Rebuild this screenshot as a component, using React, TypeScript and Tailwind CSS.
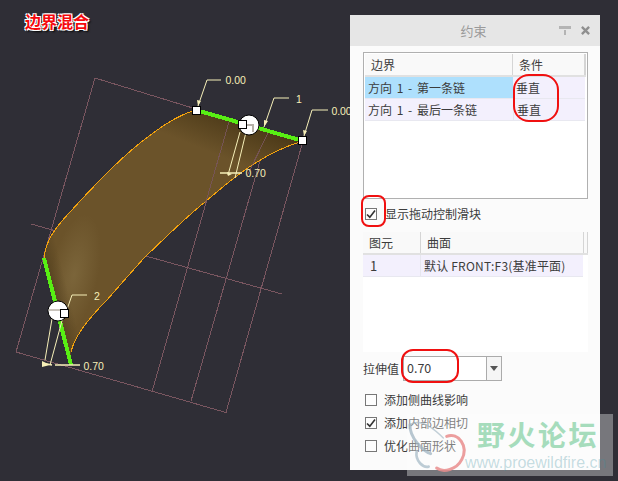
const F = '"Noto Sans CJK SC", "Liberation Sans", sans-serif';

function Canvas() {
  const pink = "#7a5660";
  const yel = "#f6efb8";
  const surface =
    "M196 110C175 116 158 129 140 143C115 163 90 190 70 212C55 228 46 240 44 258L71 365L71 352C74 338 85 322 107 300C120 285 135 268 145 257C165 238 185 218 205 202C235 176 265 152 303 141Z";
  return (
    <svg width="350" height="481" viewBox="0 0 350 481" className="shrink-0 block">
      <defs>
        <linearGradient id="sf" gradientUnits="userSpaceOnUse" x1="222" y1="108" x2="205" y2="150">
          <stop offset="0" stopColor="#4a3817" />
          <stop offset="1" stopColor="#6b532a" />
        </linearGradient>
        <radialGradient
          id="sf2"
          gradientUnits="userSpaceOnUse"
          cx="0"
          cy="0"
          r="1"
          gradientTransform="translate(74 275) rotate(12) scale(24 62)"
        >
          <stop offset="0" stopColor="#7d673c" stopOpacity="0.9" />
          <stop offset="1" stopColor="#7d673c" stopOpacity="0" />
        </radialGradient>
        <linearGradient id="sf3" gradientUnits="userSpaceOnUse" x1="44" y1="280" x2="64" y2="275">
          <stop offset="0" stopColor="#4e3c1c" stopOpacity="0.9" />
          <stop offset="1" stopColor="#4e3c1c" stopOpacity="0" />
        </linearGradient>
      </defs>
      <g fill="none" stroke={pink} strokeWidth="1" shapeRendering="crispEdges">
        <path d="M196 109L95 78L16 352L226 412.5L303 141" />
        <path d="M31 224L282 294" />
        <path d="M229 122L152 392" />
        <path d="M268 133L191 401" />
      </g>
      <path d={surface} fill="url(#sf)" />
      <path d={surface} fill="url(#sf2)" />
      <path d={surface} fill="url(#sf3)" />
      <g fill="none" stroke="#f5a30c" strokeWidth="1" shapeRendering="crispEdges">
        <path d="M196 110C175 116 158 129 140 143C115 163 90 190 70 212C55 228 46 240 44 258" />
        <path d="M71 352C74 338 85 322 107 300C120 285 135 268 145 257C165 238 185 218 205 202C235 176 265 152 303 141" />
      </g>
      <g fill="none" stroke={pink} strokeWidth="1" shapeRendering="crispEdges">
        <path d="M229 122L205 205M268 133L247 176" opacity="0.8" />
      </g>
      <g stroke="#58ee14" strokeWidth="4" fill="none" shapeRendering="crispEdges">
        <path d="M196 110L303 141" />
        <path d="M44 258L71 365" />
      </g>
      <g fill="none" stroke={yel} strokeWidth="1">
        <path d="M198 106L207 80H221" />
        <path d="M264 127L274 98H289" />
        <path d="M304 136L312 110H328" />
        <path d="M240 132L228 175M247 128L235 178" />
        <path d="M220 173H242" strokeWidth="1.5" />
        <path d="M64 318L72 295H87" />
        <path d="M53 313L45 360M63 317L50 365" />
        <path d="M42 363L52 365M55 365H80" strokeWidth="1.3" />
      </g>
      <g fill={yel}>
        <path d="M198 106L197 100L201 101Z" />
        <path d="M264 127L264 120L268 121Z" />
        <path d="M304 136L303 130L307 131Z" />
        <path d="M227 172L232 174L228 176Z" />
        <path d="M42 361L50 365L42 367Z" />
      </g>
      <g fill={yel} fontSize="10.5" fontFamily='"Liberation Sans", sans-serif'>
        <text x="225.500" y="84">0.00</text>
        <text x="296" y="103">1</text>
        <text x="331.500" y="115" textLength="20">0.00</text>
        <text x="245.500" y="177">0.70</text>
        <text x="94" y="300">2</text>
        <text x="83.500" y="370">0.70</text>
      </g>
      <circle cx="249" cy="125" r="10" fill="#fff" stroke="#000" strokeWidth="1" />
      <circle cx="58" cy="311" r="10" fill="#fff" stroke="#000" strokeWidth="1" />
      <path d="M246 124H254V132H252V126H246Z" fill="#b5b0a8" />
      <path d="M48.500 309H66V311H48.500Z" fill="#c9c4bc" />
      <g fill="#fff" stroke="#000" strokeWidth="1">
        <rect x="192.500" y="106.500" width="8" height="8" />
        <rect x="298.500" y="136.500" width="8" height="8" />
        <rect x="238.500" y="120.500" width="8" height="8" />
        <rect x="60.500" y="309.500" width="8" height="8" />
      </g>
    </svg>
  );
}

function Check({ on }: { on?: boolean }) {
  return (
    <span className="w-[12px] h-[12px] border border-[#777] bg-[#fdfdfd] shrink-0 flex items-center justify-center">
      {on && (
        <svg width="10" height="10" viewBox="0 0 10 10">
          <path d="M1 5.500L3.800 8.200L9 1.500" fill="none" stroke="#333" strokeWidth="1.6" />
        </svg>
      )}
    </span>
  );
}

function Panel() {
  return (
    <div className="w-[250px] h-[455px] mt-[15px] bg-[#fbfbfb] flex flex-col text-[12px] text-[#3c3c3c] leading-none">
      <div className="h-[31px] shrink-0 bg-[#e6e6e6] flex items-center">
        <span className="flex-1 text-center text-[13px] text-[#9a9a9a] pl-[38px]">约束</span>
        <svg width="12" height="9" viewBox="0 0 12 9" className="mr-[10px]">
          <path d="M0 0H12V3H0ZM5 4H7V9H5Z" fill="#b4b4b4" />
        </svg>
        <svg width="9" height="9" viewBox="0 0 10 10" className="mr-[10px]">
          <path d="M1 1L9 9M9 1L1 9" stroke="#8f8f8f" strokeWidth="2.6" />
        </svg>
      </div>

      <div className="mt-[6px] ml-[13px] w-[225px] h-[147px] bg-white border border-[#b0b0b0] p-[1px] shrink-0">
        <div className="flex h-[23px] bg-[#f9f9f9] border-b-[2px] border-[#e1e1e1] items-center">
          <span className="w-[148px] pl-[6px] border-r border-[#d5d5d5] h-full flex items-center">边界</span>
          <span className="flex-1 pl-[6px]">条件</span>
          <span className="w-[2px] h-full bg-[#d5d5d5]" />
        </div>
        <div className="flex h-[22px] items-center border-b border-[#e8e8f0] mr-[1px]">
          <span className="w-[148px] h-full bg-[#aee0fd] pl-[3px] flex items-center [word-spacing:2px]">方向 1 - 第一条链</span>
          <span className="flex-1 h-full bg-[#f3f0fd] pl-[3px] flex items-center">垂直</span>
        </div>
        <div className="flex h-[22px] items-center bg-[#f3f0fd] border-b border-[#e8e8f0] mr-[1px]">
          <span className="w-[148px] h-full pl-[3px] flex items-center [word-spacing:2px]">方向 1 - 最后一条链</span>
          <span className="flex-1 h-full pl-[3px] flex items-center border-l border-[#e6e6ee]">垂直</span>
        </div>
      </div>

      <div className="mt-[9px] ml-[15px] h-[12px] flex items-center gap-[8px] shrink-0">
        <Check on />
        <span>显示拖动控制滑块</span>
      </div>

      <div className="mt-[12px] ml-[13px] w-[225px] h-[120px] bg-white shrink-0">
        <div className="flex h-[23px] bg-[#f9f9f9] border-b-[2px] border-[#e1e1e1] items-center">
          <span className="w-[58px] pl-[6px] border-r border-[#d5d5d5] h-full flex items-center">图元</span>
          <span className="flex-1 pl-[6px]">曲面</span>
          <span className="w-[5px] h-full border-x border-[#d5d5d5]" />
        </div>
        <div className="flex h-[22px] items-center bg-[#f3f0fd] border-b border-[#e8e8f0] w-[220px]">
          <span className="w-[58px] h-full pl-[7px] flex items-center text-[13px] border-r border-[#e6e6ee]">1</span>
          <span className="flex-1 pl-[3px] whitespace-nowrap tracking-[0.2px]">默认 FRONT:F3(基准平面)</span>
        </div>
      </div>

      <div className="mt-[4px] ml-[13px] flex items-center h-[25px] shrink-0">
        <span className="w-[40px] whitespace-nowrap">拉伸值</span>
        <div className="w-[99px] h-[25px] bg-white border border-[#ababab] flex items-center">
          <span className="flex-1 pl-[3px] text-[12.5px]">0.70</span>
          <span className="w-[15px] h-full border-l border-[#ababab] bg-[#f5f5f5] flex items-center justify-center">
            <svg width="8" height="5" viewBox="0 0 8 5"><path d="M0 0H8L4 5Z" fill="#555" /></svg>
          </span>
        </div>
      </div>

      <div className="mt-[13px] ml-[15px] flex flex-col gap-[11px]">
        <div className="flex items-center gap-[7px] h-[12px]"><Check /><span>添加侧曲线影响</span></div>
        <div className="flex items-center gap-[7px] h-[12px]"><Check on /><span>添加内部边相切</span></div>
        <div className="flex items-center gap-[7px] h-[12px]"><Check /><span>优化曲面形状</span></div>
      </div>
    </div>
  );
}

function Oval({ className }: { className: string }) {
  return <div className={`absolute border-[2px] border-[#f01010] ${className}`} />;
}

export default function App() {
  return (
    <div className="relative w-[618px] h-[481px] overflow-hidden bg-[#2f2e36] flex" style={{ fontFamily: F }}>
      <Canvas />
      <Panel />
      <div className="absolute left-[25px] top-[10px] text-[16px] font-bold leading-[22px] text-[#f5080c] [text-shadow:1px_1px_0_#fff,-1px_-1px_0_#fff,1px_-1px_0_#fff,-1px_1px_0_#fff,2px_2px_2px_#000]">
        边界混合
      </div>
      <Oval className="left-[513px] top-[74px] w-[46px] h-[48px] rounded-[16px]" />
      <Oval className="left-[361px] top-[195px] w-[25px] h-[32px] rounded-[8px]" />
      <Oval className="left-[401px] top-[349px] w-[58px] h-[34px] rounded-[12px]" />
      <div className="absolute left-[407px] top-[414px] w-[206px] h-[62px] bg-[#ffffff]/35 overflow-hidden">
        <svg width="218" height="73" viewBox="0 0 654 219" className="absolute left-[-7px] top-[-6px]" fill="none" strokeLinecap="round">
          <path d="M30 50C60 30 100 60 130 90" stroke="#a9bcc8" strokeWidth="4" opacity="0.7" />
          <path d="M30 50C28 90 70 130 92 137" stroke="#a0b4c2" strokeWidth="9" opacity="0.75" />
          <path d="M50 130C45 160 70 180 86 176" stroke="#a8bcc8" strokeWidth="8" opacity="0.75" />
          <path d="M140 85C175 72 207 115 185 155C170 185 130 195 110 180" stroke="#e98d8d" strokeWidth="9" opacity="0.85" />
        </svg>
        <div className="absolute left-[70px] top-[5px] text-[28px] leading-[30px] font-bold tracking-[2.5px] text-[#a6dcbc] whitespace-nowrap">
          野火论坛
        </div>
        <div className="absolute left-[58px] top-[39px] text-[16px] leading-[20px] text-[#3f8f9f]/30 whitespace-nowrap" style={{ fontFamily: '"Liberation Sans", sans-serif' }}>
          www.proewildfire.cn
        </div>
      </div>
    </div>
  );
}
